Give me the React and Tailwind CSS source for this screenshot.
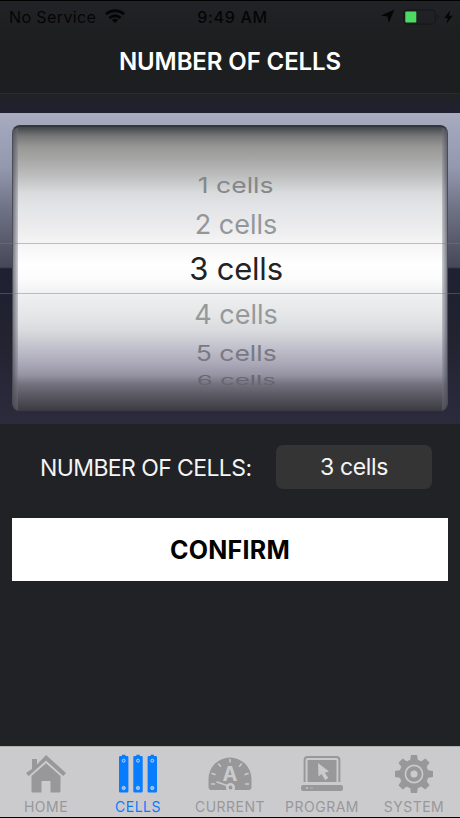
import { useState } from 'react';

const wheelItems = [
  { label: '1 cells', className: 'h-[38px] text-[#85878a] scale-x-[1.06] scale-y-[0.88]', size: 'text-[25px]' },
  { label: '2 cells', className: 'h-[40px] text-[#94979a]', size: 'text-[27px]' },
  { label: '3 cells', className: 'h-[50px] text-[#232324] pb-[2px] tracking-[-0.2px]', size: 'text-[31px]' },
  { label: '4 cells', className: 'h-[40px] text-[#96999c]', size: 'text-[27px]' },
  { label: '5 cells', className: 'h-[38px] text-[#797984] scale-x-[1.06] scale-y-[0.88]', size: 'text-[25px]' },
  { label: '6 cells', className: 'h-[16px] text-[#686671] scale-x-[1.03] scale-y-[0.52]', size: 'text-[25px]' },
];

const StatusBar = () => (
  <div className="flex h-8 items-center justify-between border-t border-black pl-[9px] pr-[7px] text-[16px] text-[#050506]">
    <div className="flex w-[150px] items-center gap-[9px]">
      <span className="tracking-[0.4px] whitespace-nowrap">No Service</span>
      <svg width="20" height="15" viewBox="0 0 20 15" fill="none" stroke="currentColor" strokeWidth="2.9">
        <path d="M1 5.3C6 .6 14 .6 19 5.3" />
        <path d="M4.4 9C7.6 6 12.4 6 15.6 9" />
        <path d="M10 14 6.8 10.9C8.6 9.3 11.4 9.3 13.2 10.9Z" fill="currentColor" stroke="none" />
      </svg>
    </div>
    <span className="pl-[3px] font-medium tracking-[0.7px]">9:49 AM</span>
    <div className="flex w-[150px] items-center justify-end">
      <svg className="mr-[8px]" width="15" height="15" viewBox="0 0 15 15" fill="currentColor">
        <path d="M14.3.7 8.8 14.2 7.5 7.6.8 6.4Z" />
      </svg>
      <svg className="mr-[4px]" width="37" height="16" viewBox="0 0 37 16">
        <rect x=".7" y=".9" width="31.6" height="14.2" rx="3.5" fill="none" stroke="#18191b" strokeWidth="1.3" />
        <rect x="2.3" y="2.4" width="11" height="11.2" rx="1" fill="#4cd964" />
        <path d="M34 5.5c2 .9 2 4.1 0 5Z" fill="#18191b" />
      </svg>
      <svg width="9" height="14" viewBox="0 0 9 14" fill="currentColor">
        <path d="M6.2.3.3 8h3.5L2.5 13.7 8.7 5.7H5Z" />
      </svg>
    </div>
  </div>
);

const Wheel = () => (
  <div className="h-[311px] bg-[linear-gradient(180deg,#aaacbf_0px,#a2a6bc_14px,#9498af_55px,#707386_95px,#464858_154px,#1f2032_156px,#22232f_220px,#28283a_280px,#2b2b3b_311px)] pt-3">
    <div className="relative mx-[12px] h-[286px] overflow-hidden rounded-[8px] border-x border-t-2 border-[#4b4d55] border-t-[#34383c] bg-[linear-gradient(180deg,#414649_0px,#777_9px,#989897_20px,#a5a5a4_31px,#bdbebe_49px,#dadbdd_66px,#e4e5e8_82px,#ececee_100px,#f5f5f6_117px,#ffffff_138px,#fbfbfb_153px,#eeeff0_169px,#e4e5e7_190px,#d9dadd_204px,#c2c1cd_220px,#aaa8b6_237px,#9694a3_248px,#74727e_257px,#5b5963_268px,#37363e_286px)]">
      <div className="flex flex-col items-center pt-[39px] pl-[12px] leading-none">
        {wheelItems.map((item) => (
          <div key={item.label} className={`flex items-center justify-center ${item.size} ${item.className}`}>
            {item.label}
          </div>
        ))}
      </div>
      <div className="absolute inset-y-0 left-0 w-[5px] bg-gradient-to-r from-[#51525f]/75 to-[#777987]/35" />
      <div className="absolute inset-y-0 right-0 w-[5px] bg-gradient-to-l from-[#51525f]/75 to-[#777987]/35" />
    </div>
    <div className="relative -mt-[168px] h-[51px] border-y border-[#777981]/45" />
  </div>
);

const HomeIcon = () => (
  <svg width="42" height="40" viewBox="0 0 42 40" fill="currentColor">
    <path d="M7 15V5h5v5.5L21 1l20 18-2.7 3L21 6.6 3.7 22 1 19Z" />
    <path d="M21 9.3 35.5 22v15a1.5 1.5 0 0 1-1.5 1.5h-8.5V27h-9v11.5H8A1.5 1.5 0 0 1 6.5 37V22Z" />
  </svg>
);

const CellsIcon = () => (
  <svg width="38" height="40" viewBox="0 0 38 40" fill="currentColor">
    {[0, 14.3, 28.6].map((x) => (
      <g key={x} transform={`translate(${x} 0)`}>
        <path d="M1.3 2H3V.8h3.4V2h1.7Q9.4 2 9.4 3.3v34q0 1.3-1.3 1.3H1.3Q0 38.6 0 37.3v-34Q0 2 1.3 2Z" />
        <circle cx="4.7" cy="6.7" r="1.5" fill="#248aff" stroke="#b8cfe6" strokeWidth="1" />
        <circle cx="4.7" cy="34" r="1.7" fill="#8fbded" stroke="#b8cfe6" strokeWidth=".8" />
      </g>
    ))}
  </svg>
);

const CurrentIcon = () => (
  <svg width="44" height="40" viewBox="0 0 44 40" fill="currentColor">
    <path d="M2.5 36A3 3 0 0 1 .5 33V25a21.5 21.5 0 0 1 43 0v8a3 3 0 0 1-2 3Z" />
    <g stroke="#cbcbcd" strokeWidth="1.5" fill="none" strokeLinecap="round">
      <path d="M3.5 30H6.5M4 19.5l3 1M10.5 10l2 2.3M33.5 10l-2 2.3M40 19.5l-3 1M40.5 30H37.5M22 5.5V8M9 28l10 3.5" />
      <circle cx="22.5" cy="33.5" r="3.3" fill="currentColor" strokeWidth="2.6" />
    </g>
    <text x="22" y="26.500" textAnchor="middle" fontSize="20" fontWeight="700" fill="#cbcbcd">A</text>
  </svg>
);

const ProgramIcon = () => (
  <svg width="42" height="40" viewBox="0 0 42 40" fill="currentColor">
    <path d="M3.6 28V6Q3.6 3 6.6 3h28.8Q38.4 3 38.4 6v22" fill="none" stroke="currentColor" strokeWidth="2" />
    <path d="M6.5 6h29v22h-29Z" />
    <path d="M2 31h38q2 0 2 2v1.500q0 2.500-2.500 2.500h-37Q0 37 0 34.500V33q0-2 2-2Z" />
    <path d="m17 9 .5 13.500 3.200-2.500 3.300 6 3.300-1.900-3.500-5.400 4.200-1.200Z" fill="#cbcbcd" />
    <circle cx="6" cy="34" r=".9" fill="#cbcbcd" />
    <path d="M9 34h3" stroke="#b8b8ba" strokeWidth="1" />
  </svg>
);

const SystemIcon = () => (
  <svg className="-ml-px" width="40" height="40" viewBox="0 0 40 40" fill="currentColor">
    {[0, 45, 90, 135].map((angle) => (
      <path key={angle} d="M16 7 17 1h6L24 7v26l-1 6h-6L16 33Z" transform={`rotate(${angle} 20 20)`} />
    ))}
    <circle cx="20" cy="20" r="14.5" />
    <circle cx="20" cy="20" r="8.6" fill="none" stroke="#cbcbcd" strokeWidth="1.6" />
    <circle cx="20" cy="20" r="3.5" fill="#cbcbcd" />
  </svg>
);

const tabs = [
  { name: 'HOME', Icon: HomeIcon },
  { name: 'CELLS', Icon: CellsIcon },
  { name: 'CURRENT', Icon: CurrentIcon },
  { name: 'PROGRAM', Icon: ProgramIcon },
  { name: 'SYSTEM', Icon: SystemIcon },
];

export default function App() {
  const [active, setActive] = useState('CELLS');

  return (
    <div className="flex h-[818px] w-[460px] flex-col overflow-hidden bg-[#202225] font-['Inter',sans-serif]">
      {/* Header */}
      <header className="h-[94px] border-b border-[#292b2c] bg-gradient-to-b from-[#222327] to-[#1d1e1f] to-40%">
        <StatusBar />
        <h1 className="mt-[12px] text-center text-[24px] leading-9 font-semibold tracking-[-0.1px] whitespace-nowrap text-white">
          NUMBER OF CELLS
        </h1>
      </header>
      <div className="h-[19px] bg-gradient-to-b from-[#202225] to-[#202131]" />

      <Wheel />

      {/* Selected value */}
      <div className="mt-[21px] flex items-center justify-between pr-7 pl-10">
        <span className="pt-[2px] text-[23px] tracking-[-0.6px] whitespace-nowrap text-[#f4f4f4]">NUMBER OF CELLS:</span>
        <div className="flex h-11 w-[156px] items-center justify-center rounded-[7px] bg-[#343434] text-[23px] tracking-[-0.35px] text-[#f4f4f4]">
          3 cells
        </div>
      </div>
      <button className="mx-3 mt-[29px] h-[63px] bg-white pt-[2px] text-[25px] font-bold tracking-[0.25px] text-black">
        CONFIRM
      </button>

      {/* Tab bar */}
      <nav className="mt-auto grid h-[72px] grid-cols-5 border-t border-b border-t-[#b0b0b2] border-b-black bg-[#cbcbcd]">
        {tabs.map(({ name, Icon }) => (
          <button
            key={name}
            onClick={() => setActive(name)}
            className={`flex flex-col items-center pt-[7px] ${active === name ? 'text-[#087cff]' : 'text-[#98989a]'}`}
          >
            <Icon />
            <span className="mt-[5px] text-[14px] leading-4 tracking-[0.5px]">{name}</span>
          </button>
        ))}
      </nav>
    </div>
  );
}
